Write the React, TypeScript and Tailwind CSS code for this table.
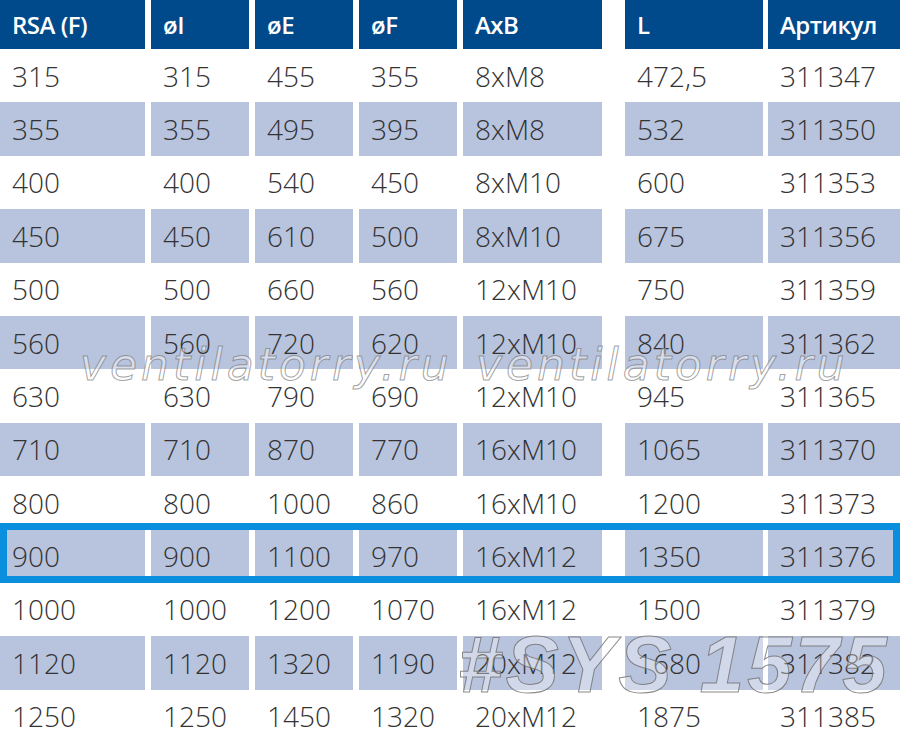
import React from "react";

const headers = ["RSA (F)", "øI", "øE", "øF", "AxB", "L", "Артикул"];

const rows: string[][] = [
  ["315", "315", "455", "355", "8xM8", "472,5", "311347"],
  ["355", "355", "495", "395", "8xM8", "532", "311350"],
  ["400", "400", "540", "450", "8xM10", "600", "311353"],
  ["450", "450", "610", "500", "8xM10", "675", "311356"],
  ["500", "500", "660", "560", "12xM10", "750", "311359"],
  ["560", "560", "720", "620", "12xM10", "840", "311362"],
  ["630", "630", "790", "690", "12xM10", "945", "311365"],
  ["710", "710", "870", "770", "16xM10", "1065", "311370"],
  ["800", "800", "1000", "860", "16xM10", "1200", "311373"],
  ["900", "900", "1100", "970", "16xM12", "1350", "311376"],
  ["1000", "1000", "1200", "1070", "16xM12", "1500", "311379"],
  ["1120", "1120", "1320", "1190", "20xM12", "1680", "311382"],
  ["1250", "1250", "1450", "1320", "20xM12", "1875", "311385"],
];

const colClass = [
  "w-[145px]",
  "w-[98px] ml-[6px]",
  "w-[98px] ml-[6px]",
  "w-[98px] ml-[6px]",
  "w-[139px] ml-[6px]",
  "w-[138px] ml-[23px]",
  "w-[132px] ml-[5px]",
];

export default function App() {
  return (
    <div className="relative w-[900px] h-[743px] overflow-hidden bg-white">
      <div className="flex flex-col">
        <div className="flex h-[49px]">
          {headers.map((h, i) => (
            <div
              key={i}
              className={`${colClass[i]} shrink-0 h-full bg-[#004a8c] flex items-center pl-3 text-white text-[24px] font-semibold tracking-[-0.5px] [font-family:'Open_Sans',sans-serif]`}
            >
              {h}
            </div>
          ))}
        </div>
        {rows.map((r, ri) => (
          <div key={ri} className="flex h-[53.385px]">
            {r.map((c, ci) => (
              <div
                key={ci}
                className={`${colClass[ci]} shrink-0 h-full flex items-center pl-3 text-[28px] font-light text-[#333333] [font-family:'Open_Sans',sans-serif] ${
                  ri % 2 === 1 ? "bg-[#b8c4de]" : "bg-white"
                }`}
              >
                {c}
              </div>
            ))}
          </div>
        ))}
      </div>

      {/* highlight box */}
      <div className="absolute left-0 top-[523px] w-[900px] h-[60px] border-[7px] border-[#0a8fdf] pointer-events-none" />

      {/* watermarks */}
      <div className="absolute left-[80px] top-[343px] text-[44px] leading-none italic tracking-[4px] text-white/45 [-webkit-text-stroke:1px_rgba(120,120,120,0.7)] [font-family:'DejaVu_Sans',sans-serif] pointer-events-none whitespace-nowrap">
        ventilatorry.ru
      </div>
      <div className="absolute left-[476px] top-[343px] text-[44px] leading-none italic tracking-[4px] text-white/45 [-webkit-text-stroke:1px_rgba(120,120,120,0.7)] [font-family:'DejaVu_Sans',sans-serif] pointer-events-none whitespace-nowrap">
        ventilatorry.ru
      </div>
      <div className="absolute left-[458px] top-[625px] text-[80px] leading-none italic font-bold tracking-[3px] text-white/35 [-webkit-text-stroke:1px_rgba(110,110,110,0.8)] [font-family:'Liberation_Sans',sans-serif] pointer-events-none whitespace-nowrap">
        #SYS 1575
      </div>
    </div>
  );
}
